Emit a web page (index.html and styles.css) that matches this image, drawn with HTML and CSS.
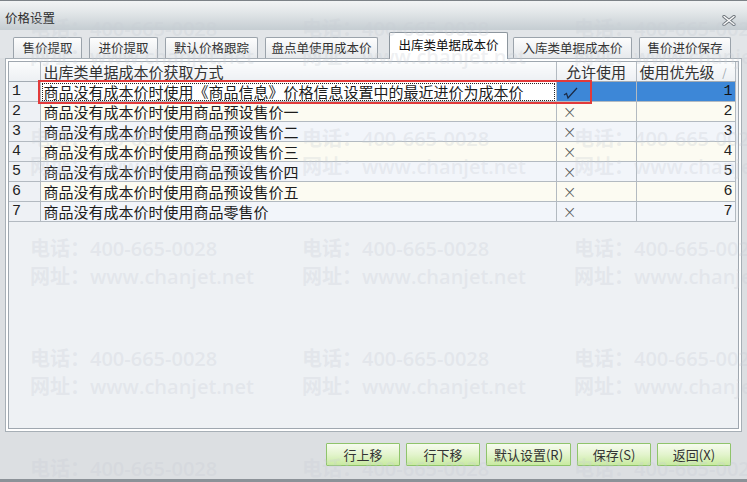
FILE: index.html
```html
<!DOCTYPE html>
<html lang="zh-CN">
<head>
  <meta charset="UTF-8"/>
  <title>价格设置</title>
  <link rel="stylesheet" href="styles.css">
</head>
<body>
  <div class="window">
    <div class="titlebar">
      <span class="title">价格设置</span>
      <svg class="close" width="14" height="11" viewBox="0 0 14 11">
        <path d="M2 1.5 L12 9.5 M12 1.5 L2 9.5" stroke="#6f767c" stroke-width="3.4" stroke-linecap="round"/>
        <path d="M2 1.5 L12 9.5 M12 1.5 L2 9.5" stroke="#fff" stroke-width="1.4" stroke-linecap="round"/>
      </svg>
    </div>

    <div class="tabs">
      <div class="tab w1">售价提取</div>
      <div class="tab w1">进价提取</div>
      <div class="tab w2">默认价格跟踪</div>
      <div class="tab w3">盘点单使用成本价</div>
      <div class="tab w4 active">出库类单据成本价</div>
      <div class="tab w4">入库类单据成本价</div>
      <div class="tab w5">售价进价保存</div>
    </div>

    <div class="panel">
      <div class="grid">
        <table class="cost-table">
          <colgroup>
            <col class="c-no"><col class="c-name"><col class="c-allow"><col class="c-level">
          </colgroup>
          <thead>
            <tr>
              <th></th>
              <th class="th-left">出库类单据成本价获取方式</th>
              <th class="th-center">允许使用</th>
              <th class="th-left">使用优先级<span class="sort">/</span></th>
            </tr>
          </thead>
          <tbody>
            <tr class="row-sel">
              <td class="no">1</td>
              <td class="name"><span class="focus">商品没有成本价时使用《商品信息》价格信息设置中的最近进价为成本价</span></td>
              <td class="allow sel">
                <svg width="16" height="14" viewBox="0 0 16 14"><path d="M1 9 L3.5 7.5 L5 12 L14 2" fill="none" stroke="#1b2a44" stroke-width="1.2"/></svg>
              </td>
              <td class="level sel">1</td>
            </tr>
            <tr class="even"><td class="no">2</td><td class="name">商品没有成本价时使用商品预设售价一</td><td class="allow">×</td><td class="level">2</td></tr>
            <tr class="odd"><td class="no">3</td><td class="name">商品没有成本价时使用商品预设售价二</td><td class="allow">×</td><td class="level">3</td></tr>
            <tr class="even"><td class="no">4</td><td class="name">商品没有成本价时使用商品预设售价三</td><td class="allow">×</td><td class="level">4</td></tr>
            <tr class="odd"><td class="no">5</td><td class="name">商品没有成本价时使用商品预设售价四</td><td class="allow">×</td><td class="level">5</td></tr>
            <tr class="even"><td class="no">6</td><td class="name">商品没有成本价时使用商品预设售价五</td><td class="allow">×</td><td class="level">6</td></tr>
            <tr class="odd"><td class="no">7</td><td class="name">商品没有成本价时使用商品零售价</td><td class="allow">×</td><td class="level">7</td></tr>
          </tbody>
        </table>
        <div class="mark-box"></div>
      </div>
    </div>

    <div class="footer">
      <button class="btn">行上移</button>
      <button class="btn">行下移</button>
      <button class="btn wide">默认设置(<u>R</u>)</button>
      <button class="btn">保存(<u>S</u>)</button>
      <button class="btn">返回(<u>X</u>)</button>
    </div>
  </div>

  <div class="watermark">
    <div class="wm-grid">
      <div class="wm"><span>电话：400-665-0028</span><span>网址：www.chanjet.net</span></div>
      <div class="wm"><span>电话：400-665-0028</span><span>网址：www.chanjet.net</span></div>
      <div class="wm"><span>电话：400-665-0028</span><span>网址：www.chanjet.net</span></div>
      <div class="wm"><span>电话：400-665-0028</span><span>网址：www.chanjet.net</span></div>
      <div class="wm"><span>电话：400-665-0028</span><span>网址：www.chanjet.net</span></div>
      <div class="wm"><span>电话：400-665-0028</span><span>网址：www.chanjet.net</span></div>
      <div class="wm"><span>电话：400-665-0028</span><span>网址：www.chanjet.net</span></div>
      <div class="wm"><span>电话：400-665-0028</span><span>网址：www.chanjet.net</span></div>
      <div class="wm"><span>电话：400-665-0028</span><span>网址：www.chanjet.net</span></div>
      <div class="wm"><span>电话：400-665-0028</span><span>网址：www.chanjet.net</span></div>
      <div class="wm"><span>电话：400-665-0028</span><span>网址：www.chanjet.net</span></div>
      <div class="wm"><span>电话：400-665-0028</span><span>网址：www.chanjet.net</span></div>
      <div class="wm"><span>电话：400-665-0028</span></div>
      <div class="wm"><span>电话：400-665-0028</span></div>
      <div class="wm"><span>电话：400-665-0028</span></div>
    </div>
  </div>
</body>
</html>
```

FILE: styles.css
```css
html, body { margin: 0; padding: 0; }
body { width: 747px; height: 482px; overflow: hidden; position: relative; background: #dcdfe2; color: #222;
  font-family: "Noto Sans CJK SC", "Noto Sans", sans-serif; }

.window { height: 478px; border-top: 1px solid #7c8287; border-bottom: 3px solid #8c9298; box-sizing: content-box; }

.titlebar { height: 29px; display: flex; align-items: flex-end; justify-content: space-between;
  background: linear-gradient(#f2f4f5 0%, #e4e8ea 35%, #c5cdd2 100%); padding: 0 11px 0 5px; }
.title { font-size: 12.5px; line-height: 20px; color: #2c2c2c; padding-bottom: 2px; }
.close { margin-bottom: 4px; }

.tabs { height: 28px; display: flex; align-items: flex-end; gap: 7px; padding-left: 13px; background: #e2e5e8; position: relative; z-index: 2; }
.tab { height: 21px; box-sizing: border-box; border: 1px solid #9ba3ab; border-bottom: none; border-radius: 2px 2px 0 0;
  background: linear-gradient(#fdfdfd, #e6e9ec); font-size: 12.5px; line-height: 20px; text-align: center; color: #333; }
.tab.w1 { width: 69px; }
.tab.w2 { width: 93px; }
.tab.w3 { width: 113px; }
.tab.w4 { width: 119px; }
.tab.w5 { width: 92px; }
.tab.active { height: 27px; margin: 0 -2px -1px 4px; background: #fff; border-color: #8d969e; line-height: 24px; color: #111; }

.panel { margin: 0 5px 0 5px; height: 374px; box-sizing: border-box; border: 1px solid #a7afb6; background: #fff; padding: 2px; }
.grid { position: relative; height: 100%; box-sizing: border-box; border: 1px solid #9fa7af; background: #eef1f4; }

.cost-table { border-collapse: collapse; table-layout: fixed; width: 726px; font-size: 15px; }
.c-no { width: 31px; }
.c-name { width: 516px; }
.c-allow { width: 80px; }
.c-level { width: 99px; }
.cost-table th, .cost-table td { height: 19px; padding: 0; border: 1px solid #b3bac1; line-height: 18px; white-space: nowrap; overflow: hidden; }
.cost-table tr > :first-child { border-left: none; }
.cost-table thead th { border-top: none; height: 19px; background: linear-gradient(#fbfcfd, #edf0f3); font-weight: normal; color: #333; border-bottom-color: #a3abb3; }
.th-left { text-align: left; padding-left: 3px !important; }
.th-center { text-align: center; }
.sort { float: right; margin-right: 8px; font-size: 11px; color: #9aa3ab; }

.no { background: #eef1f5; padding-left: 3px !important; font-family: "Liberation Mono", monospace; font-size: 15px; color: #222; }
.name { padding-left: 3px !important; color: #1c1c1c; }
.allow { padding-left: 6px !important; color: #5a5a5a; font-size: 17px; font-family: "DejaVu Sans", sans-serif; font-weight: 300; }
.level { text-align: right; padding-right: 2px !important; font-family: "Liberation Mono", monospace; font-size: 15px; }
tr.even td:not(.no) { background: #fcfbf2; }
tr.odd td:not(.no) { background: #f2f5fa; }
.row-sel .name { background: #fff; padding-left: 1px !important; }
.focus { display: block; margin-right: 1px; padding-left: 2px; outline: 1px dotted #222; outline-offset: -1px; }
.sel { background: #3d87d7; color: #111; }
.allow.sel svg { display: block; margin-top: 3px; }

.mark-box { position: absolute; left: 29px; top: 18px; width: 554px; height: 24px; box-sizing: border-box; border: 2px solid #e23a3a; }

.footer { display: flex; justify-content: flex-end; gap: 6px; padding: 11px 16px 0 0; }
.btn { width: 74px; height: 23px; padding: 0; border: 1px solid #8fc46b; border-radius: 1px;
  background: linear-gradient(#f7fcef, #e3f4cd 50%, #c8eaa0); font-family: "Noto Sans CJK SC", sans-serif; font-size: 13px; color: #333; }
.btn.wide { width: 85px; }
.btn u { text-decoration: none; }

.watermark { position: absolute; inset: 0; overflow: hidden; pointer-events: none; z-index: 5; }
.wm-grid { display: grid; grid-template-columns: repeat(3, 272px); grid-auto-rows: 110px; padding: 15px 0 0 30px; }
.wm { display: flex; flex-direction: column; font-family: "Open Sans", "Noto Sans CJK SC", sans-serif; font-size: 20px; font-weight: 600;
  line-height: 28px; color: rgba(200, 205, 212, 0.3); white-space: nowrap; }
```
